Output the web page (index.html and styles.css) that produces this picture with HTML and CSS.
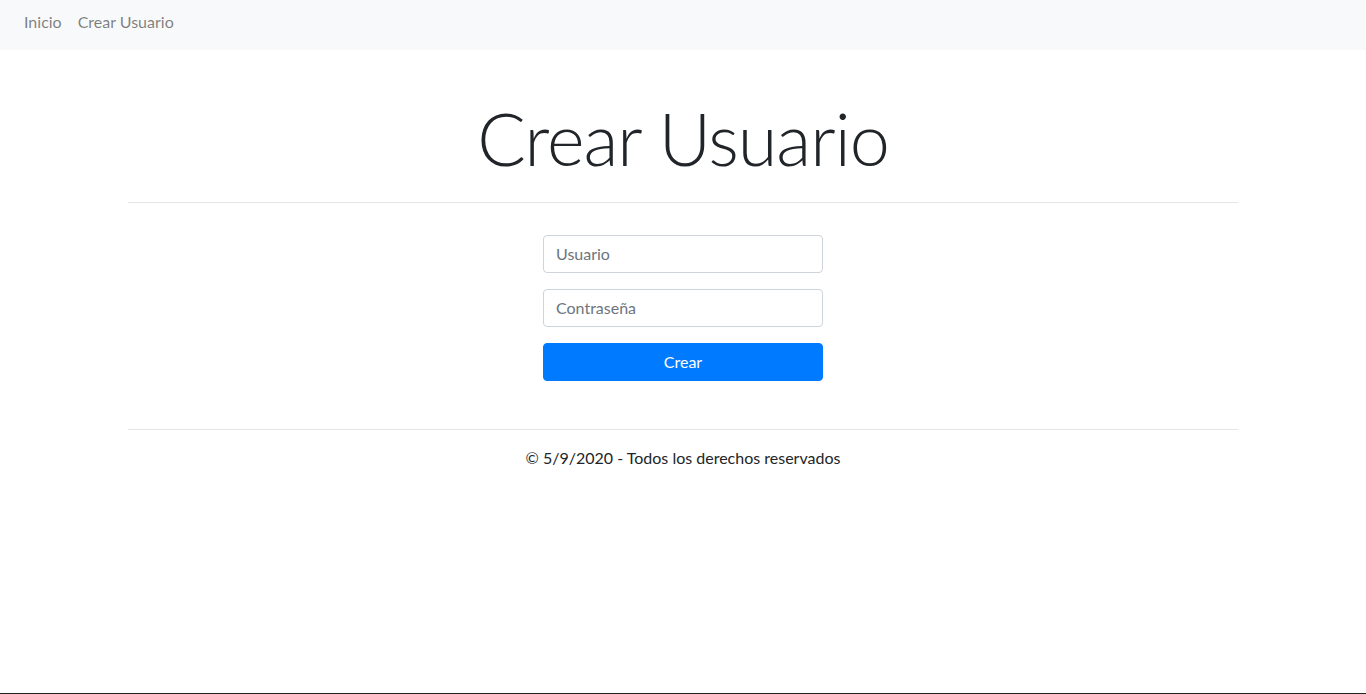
FILE: index.html
```html
<!DOCTYPE html>
<html lang="es">
<head>
<meta charset="utf-8">
<title>Crear Usuario</title>
<link rel="stylesheet" href="styles.css">
</head>
<body>
<nav class="navbar">
  <a class="nav-link" href="#">Inicio</a>
  <a class="nav-link" href="#">Crear Usuario</a>
</nav>
<main class="container">
  <h1 class="title">Crear Usuario</h1>
  <hr class="rule">
  <form class="form">
    <div class="form-group"><input class="form-control" type="text" placeholder="Usuario"></div>
    <div class="form-group"><input class="form-control" type="password" placeholder="Contraseña"></div>
    <button class="btn" type="button">Crear</button>
  </form>
  <hr class="rule footer-rule">
  <footer class="footer">© 5/9/2020 - Todos los derechos reservados</footer>
</main>
<div class="taskbar-edge"></div>
</body>
</html>
```
FILE: styles.css
```css
* { box-sizing: border-box; }
html, body { margin: 0; padding: 0; }
body {
  font-family: Lato, "Open Sans", sans-serif;
  font-size: 16px;
  line-height: 24px;
  color: #212529;
  background: #fff;
  height: 694px;
  overflow: hidden;
}
.navbar {
  height: 50px;
  background: #f8f9fa;
  display: flex;
  align-items: center;
  padding: 0 16px 6px;
}
.nav-link {
  color: rgba(0,0,0,.5);
  text-decoration: none;
  padding: 0 8px;
  line-height: 24px;
}
.container {
  width: 1140px;
  margin: 0 auto;
  padding: 0 15px;
}
.title {
  margin: 45px 0 0;
  text-align: center;
  font-size: 72px;
  font-weight: 300;
  line-height: 86px;
  letter-spacing: -1px;
}
.rule {
  margin: 21px 0 0;
  border: 0;
  border-top: 1px solid rgba(0,0,0,.1);
  height: 0;
}
.form {
  width: 280px;
  margin: 32px auto 0;
}
.form-group { margin-bottom: 16px; }
.form-control {
  display: block;
  width: 100%;
  height: 38px;
  padding: 5px 12px 7px;
  font: inherit;
  color: #495057;
  border: 1px solid #ced4da;
  border-radius: 4px;
  background: #fff;
}
.form-control::placeholder { color: #6c757d; opacity: 1; }
.btn {
  display: block;
  width: 100%;
  height: 38px;
  font: inherit;
  color: #fff;
  background: #007bff;
  border: 1px solid #007bff;
  border-radius: 4px;
  padding: 6px 12px;
}
.footer-rule { margin-top: 48px; }
.footer {
  text-align: center;
  margin-top: 16px;
}
.taskbar-edge {
  position: fixed;
  left: 0; right: 0; bottom: 0;
  height: 1px;
  background: #222;
}
```
